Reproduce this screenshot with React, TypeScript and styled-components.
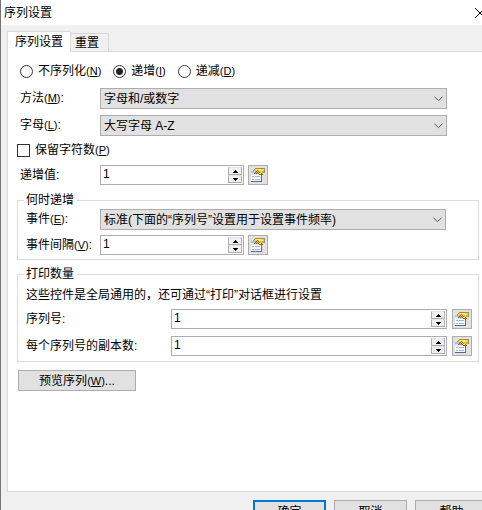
import React, { useId, useState } from "react";
import styled, { createGlobalStyle } from "styled-components";

const GlobalStyle = createGlobalStyle`
  * { box-sizing: border-box; }
  html { overflow: hidden; }
  body {
    margin: 0;
    background: #f0f0f0;
    overflow: hidden;
  }
  body, button, input, select {
    font-family: "Liberation Sans", "Noto Sans CJK SC", sans-serif;
    font-size: 12px;
    line-height: 16px;
    color: #000;
  }
`;

const Dialog = styled.main`
  min-height: 100vh;
  border-left: 1px solid #767374;
  background: #f0f0f0;
  overflow: hidden;
`;

const TitleBar = styled.header`
  display: flex;
  align-items: center;
  justify-content: space-between;
  height: 25px;
  padding-left: 3px;
  background: #fff;
`;

const Title = styled.h1`
  margin: 0;
  font-size: 12px;
  font-weight: 400;
`;

const CloseButton = styled.button`
  display: flex;
  flex: none;
  margin-right: -3px;
  padding: 0;
  border: 0;
  background: none;
`;

const Content = styled.div`
  padding: 6px 0 0 6px;
`;

const TabList = styled.div`
  display: flex;
  align-items: flex-end;
  height: 20px;
`;

const Tab = styled.button<{ $active: boolean }>`
  position: relative;
  z-index: ${(p) => (p.$active ? 1 : 0)};
  height: ${(p) => (p.$active ? 21 : 18)}px;
  margin-bottom: ${(p) => (p.$active ? -1 : 0)}px;
  padding: ${(p) => (p.$active ? "0 7px" : "0 9px 0 4px")};
  border: 1px solid #d9d9d9;
  border-bottom: 0;
  border-left-width: ${(p) => (p.$active ? 1 : 0)}px;
  background: ${(p) => (p.$active ? "#fff" : "#f0f0f0")};
  white-space: nowrap;
`;

const Panel = styled.form`
  min-height: 441px;
  padding: 11px 3px 0 9px;
  border: 1px solid #d9d9d9;
  border-right: 0;
  background: #fff;
`;

const RadioRow = styled.div`
  display: flex;
  gap: 12px;
  margin: 0 0 9px 3px;
`;

const Choice = styled.label`
  display: flex;
  align-items: center;
  gap: 5px;
  white-space: nowrap;
`;

const Radio = styled.input`
  appearance: none;
  width: 13px;
  height: 13px;
  margin: 0;
  border: 1px solid #333;
  border-radius: 50%;
  background: #fff;
  &:checked {
    background: radial-gradient(circle, #222 3px, #fff 4px);
  }
`;

const Checkbox = styled.input`
  appearance: none;
  width: 13px;
  height: 13px;
  margin: 0;
  border: 1px solid #333;
  background: #fff;
  &:checked {
    background: #333;
    box-shadow: inset 0 0 0 2px #fff;
  }
`;

const Mnemonic = styled.span`
  font-size: 11px;
`;

const Fields = styled.div`
  display: grid;
  gap: 6px;
  padding: 0 32px 0 3px;
`;

const CheckRow = styled.div`
  display: flex;
  margin: 6px 0 7px;
`;

const Row = styled.div<{ $label: number }>`
  display: grid;
  grid-template-columns: ${(p) => p.$label}px minmax(0, 1fr);
  align-items: center;
`;

const FieldLabel = styled.label`
  padding-bottom: 1px;
  white-space: nowrap;
`;

const SelectWrap = styled.div`
  display: grid;
  align-items: center;
  & > * { grid-area: 1 / 1; }
  & > svg {
    justify-self: end;
    margin-right: 4px;
    pointer-events: none;
  }
`;

const SelectBox = styled.select`
  appearance: none;
  width: 100%;
  height: 21px;
  padding: 0 20px 0 3px;
  border: 1px solid #adadad;
  border-radius: 0;
  background: #e1e1e1;
`;

const Control = styled.div<{ $gap: number }>`
  display: flex;
  gap: ${(p) => p.$gap}px;
`;

const SpinBox = styled.div<{ $wide?: boolean }>`
  display: flex;
  flex: ${(p) => (p.$wide ? "1 1 auto" : "0 0 144px")};
  min-width: 0;
  height: 20px;
  padding: 1px;
  border: 1px solid #abadb3;
  background: #fff;
`;

const SpinInput = styled.input`
  flex: 1;
  min-width: 0;
  padding: 0 0 2px 1px;
  border: 0;
  outline: 0;
  background: none;
`;

const SpinButtons = styled.div`
  display: grid;
  grid-template-rows: 1fr 1fr;
  width: 14px;
`;

const SpinButton = styled.button`
  display: flex;
  align-items: center;
  justify-content: center;
  min-height: 0;
  padding: 0;
  border: 1px solid #adadad;
  border-top-color: #e4e4e4;
  background: #f0f0f0;
`;

const IconButton = styled.button`
  display: flex;
  flex: none;
  align-items: center;
  justify-content: center;
  width: 20px;
  height: 20px;
  padding: 0;
  border: 1px solid #adadad;
  background: #e1e1e1;
`;

const Group = styled.fieldset<{ $top: number }>`
  min-width: 0;
  margin: ${(p) => p.$top}px 0 0;
  padding: 1px 6px 4px 8px;
  border: 1px solid #dcdcdc;
`;

const Legend = styled.legend`
  margin-left: -2px;
  padding: 0 3px 0 2px;
`;

const EventFields = styled.div`
  display: grid;
  gap: 5px;
  padding-right: 26px;
`;

const PrintFields = styled.div`
  display: grid;
  gap: 7px;
  padding-bottom: 1px;
`;

const Note = styled.p`
  margin: 4px 0 6px;
  white-space: nowrap;
`;

const PushButton = styled.button<{ $primary?: boolean }>`
  flex: none;
  width: 73px;
  height: 23px;
  padding: 0;
  border: ${(p) => (p.$primary ? "2px solid #0078d7" : "1px solid #adadad")};
  background: #e1e1e1;
  white-space: nowrap;
`;

const PreviewButton = styled(PushButton)`
  display: block;
  width: 118px;
  height: 21px;
  margin: 8px 0 0 1px;
`;

const Footer = styled.footer`
  display: flex;
  justify-content: flex-end;
  gap: 8px;
  margin: 8px -6px 0 0;
`;

const Key = ({ k }: { k: string }) => (
  <Mnemonic>
    (<u>{k}</u>)
  </Mnemonic>
);

const Chevron = () => (
  <svg width="9" height="6" viewBox="0 0 9 6" fill="none" stroke="#555" aria-hidden="true">
    <path d="M.5 .8 4.5 4.6 8.5 .8" />
  </svg>
);

const Arrow = ({ up }: { up?: boolean }) => (
  <svg width="5" height="3" viewBox="0 0 5 3" shapeRendering="crispEdges" aria-hidden="true">
    <path d={up ? "M2 0h1v1h1v1h1v1H0V2h1V1h1z" : "M0 0h5v1H4v1H3v1H2V2H1V1H0z"} />
  </svg>
);

const FormIcon = () => (
  <svg width="14" height="14" viewBox="0 0 14 14" shapeRendering="crispEdges" aria-hidden="true">
    <path fill="#a9c3f0" d="M0 3h5v2H0z" />
    <path fill="#dbe6f8" d="M0 5h11v2H0z" />
    <path fill="#f8fafe" d="M0 7h11v6H0z" />
    <path fill="#5a6c8c" d="M10 7h1v7H0v-1h10z" />
    <path fill="#9db8e4" d="M1 8h2v1H1zM4 8h5v1H4zM1 11h2v1H1zM4 11h5v1H4z" />
    <path fill="#b98a1c" d="M4 0h9v1H4zM3 1h1v1H3zM2 2h1v1H2z" />
    <path fill="#f6cf3f" d="M4 1h9v4h-1v1H8V5H6V4H4V3H3V2h1z" />
    <path fill="#ffea86" d="M5 1h5v1H5zM8 2h4v1H8zM8 5h2v1H8z" />
    <path fill="#dba81f" d="M11 3h2v2h-2zM9 3h1v1H9z" />
    <path fill="#82682c" d="M6 2h1v1H6zM5 3h1v1H5zM7 3h1v1H7zM4 4h1v1H4zM6 4h1v1H6zM8 4h1v1H8zM3 5h1v1H3zM5 5h1v1H5zM7 5h1v1H7zM10 5h1v1h-1zM8 6h4v1H8z" />
    <path fill="#c9ad60" d="M4 3h1v1H4zM5 4h1v1H5zM4 5h1v1H4zM6 5h1v1H6z" />
    <path fill="#7f9d74" d="M13 0h1v5h-1z" />
  </svg>
);

function Combo({ id, options }: { id: string; options: string[] }) {
  return (
    <SelectWrap>
      <SelectBox id={id}>
        {options.map((o) => (
          <option key={o}>{o}</option>
        ))}
      </SelectBox>
      <Chevron />
    </SelectWrap>
  );
}

function Spinner({ id, wide }: { id: string; wide?: boolean }) {
  const [value, setValue] = useState("1");
  const step = (d: number) => setValue(String(Math.max(1, (Number(value) || 0) + d)));
  return (
    <Control $gap={wide ? 5 : 4}>
      <SpinBox $wide={wide}>
        <SpinInput id={id} type="text" inputMode="numeric" value={value} onChange={(e) => setValue(e.target.value)} />
        <SpinButtons>
          <SpinButton type="button" aria-label="增加" onClick={() => step(1)}>
            <Arrow up />
          </SpinButton>
          <SpinButton type="button" aria-label="减少" onClick={() => step(-1)}>
            <Arrow />
          </SpinButton>
        </SpinButtons>
      </SpinBox>
      <IconButton type="button" aria-label="属性">
        <FormIcon />
      </IconButton>
    </Control>
  );
}

export default function App() {
  const id = useId();
  const [mode, setMode] = useState("inc");
  const modes = [
    { value: "none", text: "不序列化", k: "N" },
    { value: "inc", text: "递增", k: "I" },
    { value: "dec", text: "递减", k: "D" },
  ];
  return (
    <>
      <GlobalStyle />
      <Dialog>
        <TitleBar>
          <Title>序列设置</Title>
          <CloseButton type="button" aria-label="关闭">
            <svg width="10" height="10" viewBox="0 0 10 10" stroke="#000" aria-hidden="true">
              <path d="M0 0 10 10M10 0 0 10" />
            </svg>
          </CloseButton>
        </TitleBar>
        <Content>
          <TabList role="tablist">
            <Tab type="button" role="tab" aria-selected="true" $active>
              序列设置
            </Tab>
            <Tab type="button" role="tab" aria-selected="false" $active={false}>
              重置
            </Tab>
          </TabList>
          <Panel onSubmit={(e) => e.preventDefault()}>
            <RadioRow role="radiogroup">
              {modes.map((m) => (
                <Choice key={m.value}>
                  <Radio type="radio" name="mode" checked={mode === m.value} onChange={() => setMode(m.value)} />
                  <span>
                    {m.text}
                    <Key k={m.k} />
                  </span>
                </Choice>
              ))}
            </RadioRow>
            <Fields>
              <Row $label={80}>
                <FieldLabel htmlFor={id + "method"}>
                  方法
                  <Key k="M" />:
                </FieldLabel>
                <Combo id={id + "method"} options={["字母和/或数字"]} />
              </Row>
              <Row $label={80}>
                <FieldLabel htmlFor={id + "letters"}>
                  字母
                  <Key k="L" />:
                </FieldLabel>
                <Combo id={id + "letters"} options={["大写字母 A-Z"]} />
              </Row>
            </Fields>
            <CheckRow>
              <Choice>
                <Checkbox type="checkbox" />
                <span>
                  保留字符数
                  <Key k="P" />
                </span>
              </Choice>
            </CheckRow>
            <Fields>
              <Row $label={80}>
                <FieldLabel htmlFor={id + "step"}>递增值:</FieldLabel>
                <Spinner id={id + "step"} />
              </Row>
            </Fields>
            <Group $top={7}>
              <Legend>何时递增</Legend>
              <EventFields>
                <Row $label={74}>
                  <FieldLabel htmlFor={id + "event"}>
                    事件
                    <Key k="E" />:
                  </FieldLabel>
                  <Combo id={id + "event"} options={["标准(下面的“序列号”设置用于设置事件频率)"]} />
                </Row>
                <Row $label={74}>
                  <FieldLabel htmlFor={id + "interval"}>
                    事件间隔
                    <Key k="V" />:
                  </FieldLabel>
                  <Spinner id={id + "interval"} />
                </Row>
              </EventFields>
            </Group>
            <Group $top={6}>
              <Legend>打印数量</Legend>
              <Note>这些控件是全局通用的，还可通过“打印”对话框进行设置</Note>
              <PrintFields>
                <Row $label={145}>
                  <FieldLabel htmlFor={id + "serials"}>序列号:</FieldLabel>
                  <Spinner id={id + "serials"} wide />
                </Row>
                <Row $label={145}>
                  <FieldLabel htmlFor={id + "copies"}>每个序列号的副本数:</FieldLabel>
                  <Spinner id={id + "copies"} wide />
                </Row>
              </PrintFields>
            </Group>
            <PreviewButton type="button">
              预览序列
              <Key k="W" />
              ...
            </PreviewButton>
          </Panel>
          <Footer>
            <PushButton type="button" $primary>
              确定
            </PushButton>
            <PushButton type="button">取消</PushButton>
            <PushButton type="button">帮助</PushButton>
          </Footer>
        </Content>
      </Dialog>
    </>
  );
}
